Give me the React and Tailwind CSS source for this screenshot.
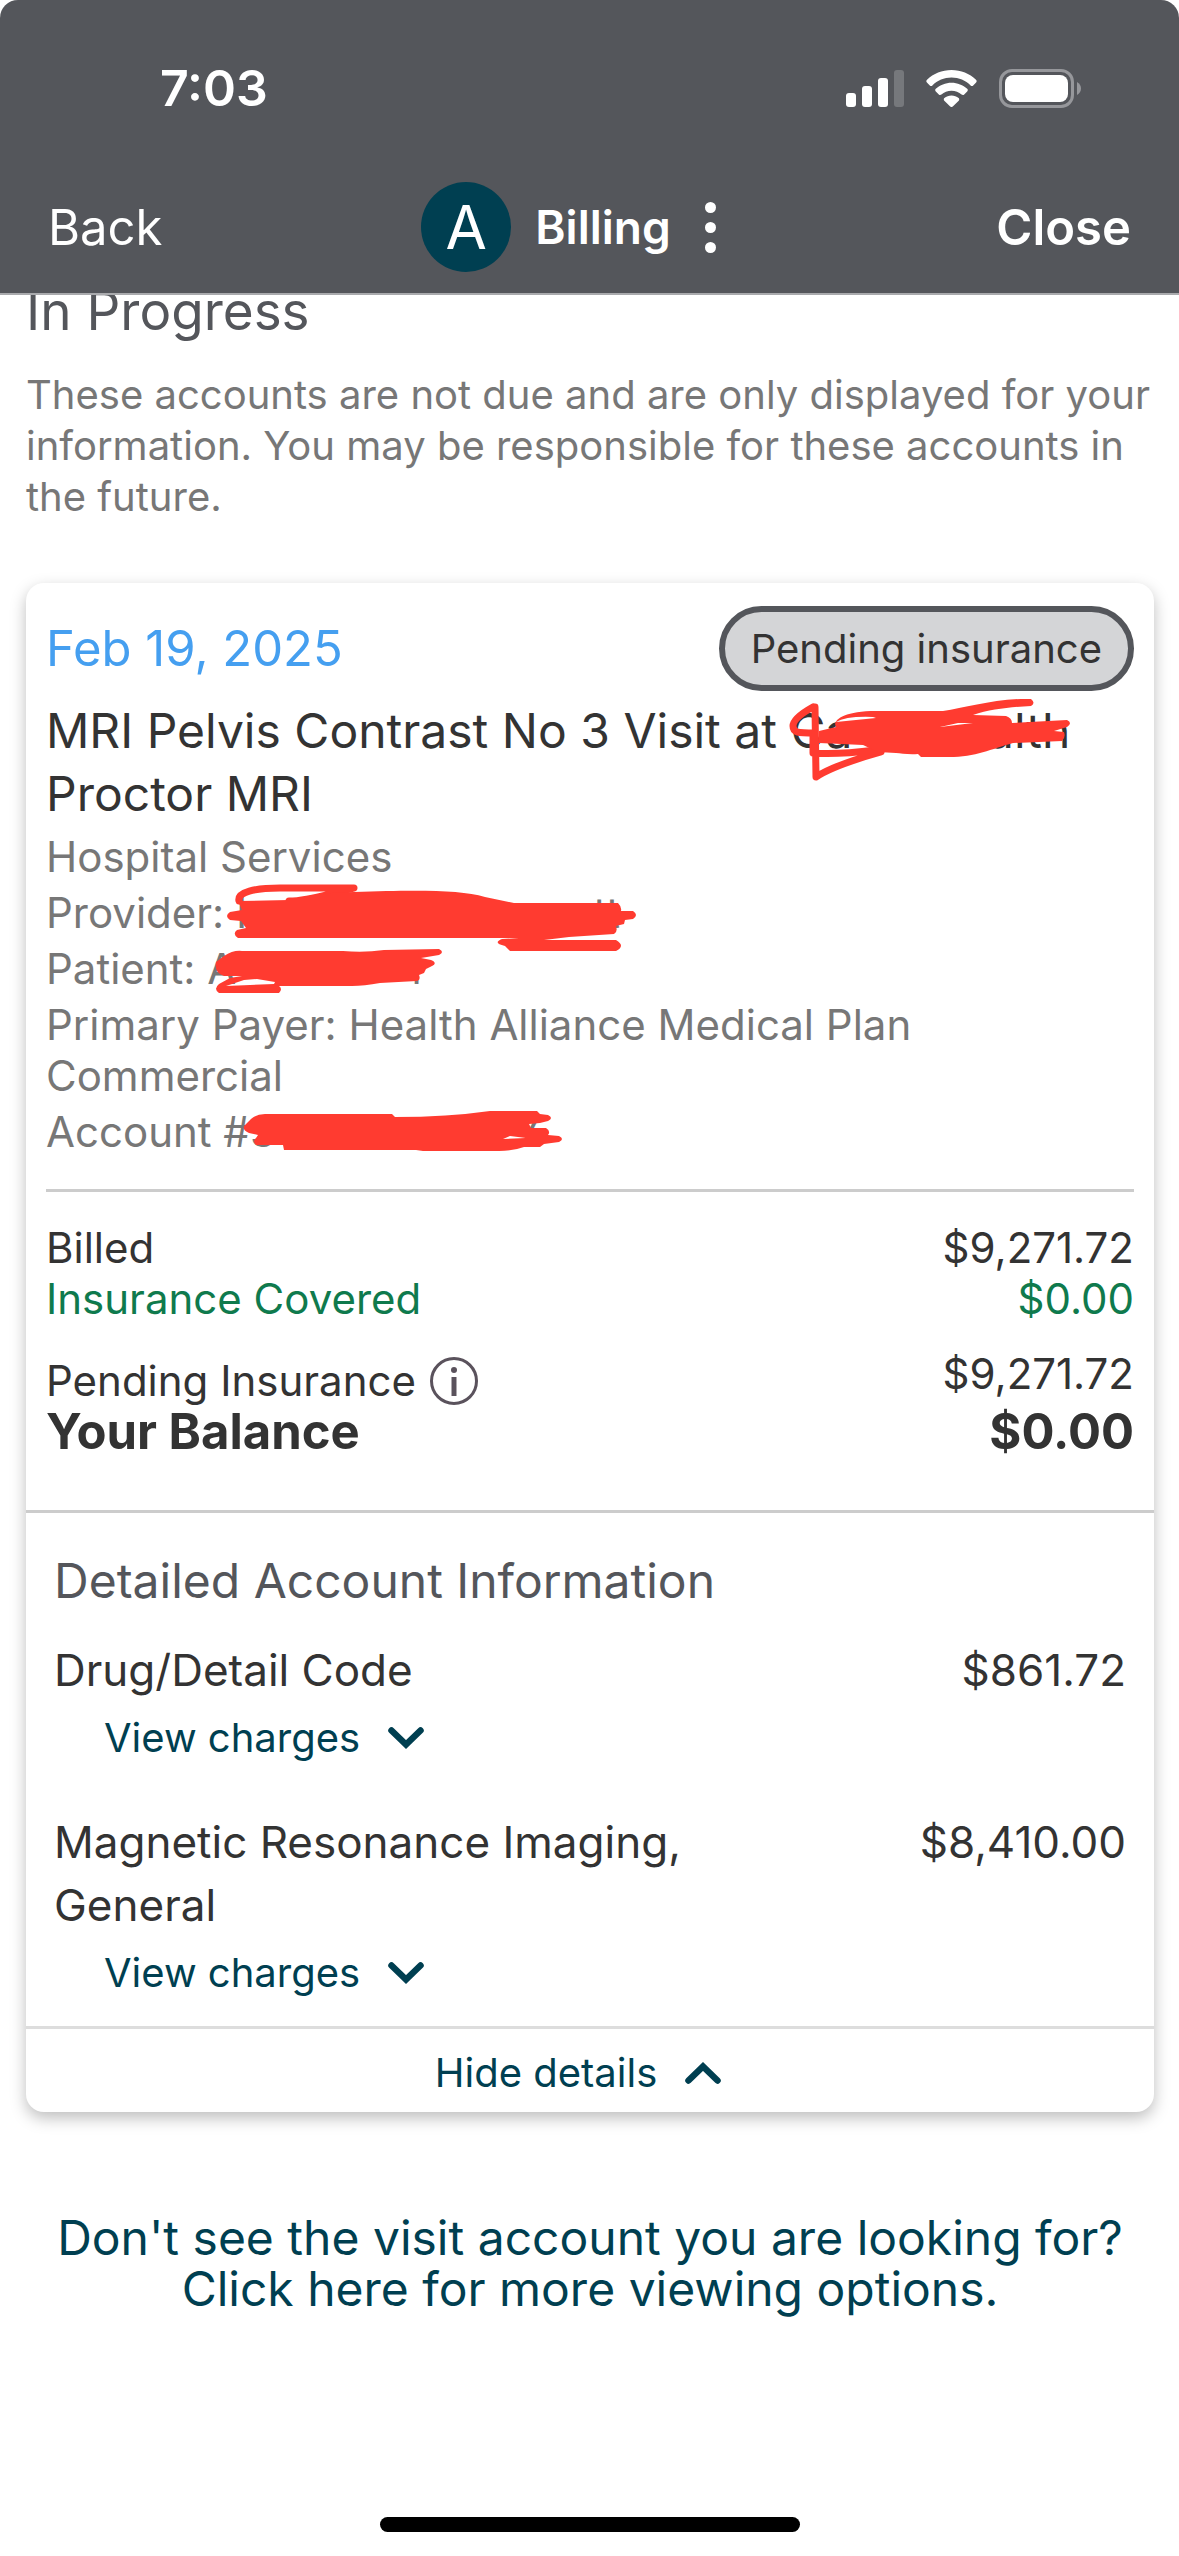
import { useState } from 'react';

const charges = [
  { id: 1, name: 'Drug/Detail Code', amount: '$861.72' },
  { id: 2, name: 'Magnetic Resonance Imaging, General', amount: '$8,410.00' },
];

function StatusBar() {
  return (
    <div className="flex h-[120px] items-center justify-between pt-14 pl-[160px] pr-[98px]">
      <span className="text-[50px] leading-none font-semibold">7:03</span>
      <div className="flex items-center gap-[22px]">
        <svg className="h-[37px] w-[58px]" viewBox="0 0 58 37" fill="#fff">
          <rect x="0" y="23" width="10" height="14" rx="3" />
          <rect x="16" y="16" width="10" height="21" rx="3" />
          <rect x="32" y="8" width="10" height="29" rx="3" />
          <rect x="48" y="0" width="10" height="37" rx="3" fill="#76787c" />
        </svg>
        <svg className="h-[37px] w-[51px]" viewBox="0 0 51 37" fill="#fff">
          <path d="M25.500 0C35 0 43.500 3.600 50 9.700c.9.800.9 1.900.1 2.700l-2.900 3c-.7.700-1.800.7-2.600 0C39.500 10.500 33 7.600 25.500 7.600S11.500 10.500 6.400 15.400c-.8.700-1.900.7-2.600 0l-2.900-3c-.8-.8-.8-1.900.1-2.700C7.500 3.600 16 0 25.500 0z" />
          <path d="M25.500 12.700c6 0 11.500 2.300 15.700 6.100.8.700.8 1.900 0 2.700l-3 3c-.7.700-1.800.7-2.600.1-2.700-2.400-6.200-3.900-10.100-3.900s-7.400 1.500-10.100 3.900c-.8.600-1.900.6-2.600-.1l-3-3c-.8-.8-.8-2 0-2.700 4.200-3.800 9.700-6.100 15.700-6.100z" />
          <path d="M25.500 25.500c2.700 0 5.200 1 7.100 2.600.8.700.8 1.800.1 2.600l-5.900 5.800c-.7.700-1.900.7-2.600 0l-5.900-5.800c-.7-.8-.7-1.900.1-2.600 1.900-1.600 4.400-2.600 7.100-2.600z" />
        </svg>
        <svg className="h-[39px] w-[82px]" viewBox="0 0 82 39">
          <rect x="1.500" y="1.500" width="72" height="36" rx="11.500" fill="none" stroke="#96979b" strokeWidth="3" />
          <rect x="6" y="6" width="63" height="27" rx="8" fill="#fff" />
          <path d="M78 13c2.500 1.200 4 3.700 4 6.500s-1.500 5.300-4 6.500z" fill="#96979b" />
        </svg>
      </div>
    </div>
  );
}

function NavBar() {
  return (
    <nav className="mt-[62px] grid grid-cols-[1fr_auto_1fr] items-center px-[48px] pb-[21px]">
      <button className="justify-self-start text-[49px] leading-none">Back</button>
      <div className="flex items-center">
        <span className="flex size-[90px] items-center justify-center rounded-full bg-[#003f51] text-[60px] leading-none">A</span>
        <h1 className="ml-6 text-[46px] leading-none font-semibold">Billing</h1>
        <button aria-label="More options" className="pr-[42px] pl-[34px]">
          <svg className="h-[51px] w-[11px]" viewBox="0 0 11 51" fill="#fff">
            <circle cx="5.500" cy="5.500" r="5.500" />
            <circle cx="5.500" cy="25.500" r="5.500" />
            <circle cx="5.500" cy="45.500" r="5.500" />
          </svg>
        </button>
      </div>
      <button className="justify-self-end text-[49px] leading-none font-semibold">Close</button>
    </nav>
  );
}

function Chevron({ up }) {
  return (
    <svg className="h-[22px] w-9" viewBox="0 0 36 22" fill="none" stroke="#003f51" strokeWidth="6.500" strokeLinecap="round" strokeLinejoin="miter">
      <path d={up ? 'M3.500 18.500 18 4.500 32.500 18.500' : 'M3.500 3.500 18 17.500 32.500 3.500'} />
    </svg>
  );
}

function InfoIcon() {
  return (
    <svg className="size-12" viewBox="0 0 48 48" fill="none" stroke="#5a525c">
      <circle cx="24" cy="24" r="22.500" strokeWidth="3" />
      <path d="M24 20v19" strokeWidth="5" />
      <circle cx="24" cy="13" r="3" fill="#5a525c" stroke="none" />
    </svg>
  );
}

// hand-drawn marker over the hidden values
const marks = {
  facility: (
    <svg className="absolute -top-1 -left-1 h-[95px] w-[290px] max-w-none" viewBox="0 0 290 95" fill="#ff3b30">
      <path d="M27 12C18 17 7 24 7 31s5 7 22 7M29 12 30 82C45 72 70 64 95 57M27 38v20Q50 60 90 55" fill="none" stroke="#ff3b30" strokeWidth="7" strokeLinecap="round" strokeLinejoin="round" />
      <path d="M33 36 50 32C46 26 56 16 90 16H157C180 13 210 3 245 4q5 4 0 7C225 12 205 14 187 20L220 21q6 2 6 7L281 25q6 3 0 7L268 36 278 37q2 5-2 9L227 48C205 54 190 62 163 62H135l-3-3C122 60 115 58 110 58L92 57 77 50 33 48zM50 27 90 23 87 22Q60 21 50 27zM154 32 172 28H187z" fillRule="evenodd" />
    </svg>
  ),
  provider: (
    <svg className="absolute -top-1 -left-4 h-[72px] w-[420px] max-w-none" viewBox="0 0 420 72" fill="#ff3b30">
      <path d="M19 18C17 9 35 5 60 5H134C110 10 90 18 69 18" fill="none" stroke="#ff3b30" strokeWidth="7" strokeLinecap="round" strokeLinejoin="round" />
      <path d="M18 18 69 17C90 12 110 9 134 9 200 7 240 7 265 14L294 20H398q4 4 3 8L413 28q6 4 0 8L405 37 404 41 396 43q2 6-2 8L349 54 324 57H396q10 6 0 11H290L285 63Q272 60 282 56L299 55H18q-6-4-1-8L26 45 21 38 10 37q-6-4 0-8L22 27zM303 50 325 47 343 48 311 56z" />
    </svg>
  ),
  patient: (
    <svg className="absolute -top-1 -left-2 h-[60px] w-[250px] max-w-none" viewBox="0 0 250 60" fill="#ff3b30">
      <path d="M17 23 25 17Q34 11 43 12H144Q165 14 185 11L240 10q6 3 0 6L222 19 232 21q7 3 1 6L227 30 225 34 220 36q2 5-2 6L181 44Q165 47 153 47H80q4 3 0 7H20Q14 50 20 45L31 39 43 37 25 37Q15 34 17 23zM27 47 45 41 58 40 76 43 75 45z" fillRule="evenodd" />
    </svg>
  ),
  account: (
    <svg className="absolute -top-1 -left-3 h-[56px] w-[330px] max-w-none" viewBox="0 0 330 56" fill="#ff3b30">
      <path d="M7 23 13 17Q18 12 27 12H154l3 3Q210 15 252 9H299l3 3L310 13q6 3 0 6L302 21 291 22 293 26 308 26q5 3 2 7L321 34q6 3 0 6L306 42 302 45 286 45Q275 49 261 49H185L178 48H46L45 43 18 43q-4-4 0-7L20 33 11 31Q3 27 7 23zM265 37 272 34 288 36z" fillRule="evenodd" />
    </svg>
  ),
};

function Hidden({ mark, start, end, className }) {
  return (
    <span className={`relative inline-flex justify-between ${className}`}>
      <span>{start}</span>
      <span>{end}</span>
      {marks[mark]}
    </span>
  );
}

function ChargeRow({ name, amount }) {
  return (
    <div>
      <div className="flex justify-between text-[44px] leading-[63px] text-[#333]">
        <h4 className="w-[650px]">{name}</h4>
        <span>{amount}</span>
      </div>
      <button className="mt-[10px] ml-[50px] flex items-center gap-7 text-[40px] leading-[51px] text-[#003f51]">
        View charges <Chevron />
      </button>
    </div>
  );
}

function AccountCard() {
  const [open, setOpen] = useState(true);

  return (
    <article className="mt-[61px] rounded-[18px] bg-white shadow-[0_6px_16px_rgba(0,0,0,0.26)]">
      <div className="px-5 pt-[23px]">
        <div className="flex items-center justify-between">
          <h3 className="text-[49px] leading-[51px] text-[#459ff0]">Feb 19, 2025</h3>
          <span className="rounded-full border-6 border-[#54565b] bg-[#d4d5d7] px-[26px] py-[11px] text-[40px] leading-[51px] text-[#333]">
            Pending insurance
          </span>
        </div>

        <p className="mt-2 text-[48px] leading-[63px] text-[#333]">
          MRI Pelvis Contrast No 3 Visit at <Hidden mark="facility" start="Ca" end="alth" className="w-[280px]" /> Proctor MRI
        </p>
        <div className="mt-[6px] space-y-[5px] text-[42px] leading-[51px] text-[#777]">
          <p>Hospital Services</p>
          <p>Provider: <Hidden mark="provider" start="I" end="tt" className="w-[384px]" /></p>
          <p>Patient: <Hidden mark="patient" start="A" end="r" className="w-[220px]" /></p>
          <p className="max-w-[900px]">Primary Payer: Health Alliance Medical Plan Commercial</p>
          <p>Account #<Hidden mark="account" start="3" end="7" className="w-[290px]" /></p>
        </div>

        <div className="mt-8 border-t-3 border-[#ccc] pt-[30px] text-[42px] leading-[51px] text-[#333]">
          <div className="flex justify-between">
            <span>Billed</span>
            <span>$9,271.72</span>
          </div>
          <div className="flex justify-between text-[#0f7a4d]">
            <span>Insurance Covered</span>
            <span>$0.00</span>
          </div>
          <div className="mt-6 flex justify-between">
            <span className="flex items-center gap-[14px] pt-[7px]">
              Pending Insurance
              <button aria-label="About pending insurance"><InfoIcon /></button>
            </span>
            <span>$9,271.72</span>
          </div>
          <div className="flex justify-between text-[49px] font-bold">
            <span>Your Balance</span>
            <span>$0.00</span>
          </div>
        </div>
      </div>

      {open && (
        <section className="mt-[53px] border-t-3 border-[#ccc] px-7 pt-9">
          <h3 className="mb-[27px] text-[48px] leading-[63px] text-[#54565b]">Detailed Account Information</h3>
          <div className="space-y-12">
            {charges.map(c => <ChargeRow key={c.id} name={c.name} amount={c.amount} />)}
          </div>
        </section>
      )}

      <button
        className="mt-7 flex w-full items-center justify-center gap-7 border-t-3 border-[#ddd] pt-[18px] pb-[14px] pr-6 text-[40px] leading-[51px] text-[#003f51]"
        onClick={() => setOpen(o => !o)}
      >
        {open ? 'Hide details' : 'Show details'} <Chevron up={open} />
      </button>
    </article>
  );
}

export default function App() {
  return (
    <div className="flex min-h-screen flex-col bg-white font-['Inter',sans-serif]">
      <header className="relative z-10 rounded-t-[18px] border-b-2 border-[#a9aaad] bg-[#54565b] text-white">
        <StatusBar />
        <NavBar />
      </header>

      <main className="-mt-4 pr-[25px] pl-[26px]">
        <h2 className="text-[53px] leading-[64px] text-[#54565b]">In Progress</h2>
        <p className="mt-[26px] text-[40px] leading-[51px] text-[#777]">
          These accounts are not due and are only displayed for your information. You may be responsible for these accounts in the future.
        </p>
        <AccountCard />
        <a href="#more" className="mt-[100px] block text-center text-[48px] leading-[51px] text-[#003f51]">
          Don't see the visit account you are looking for? Click here for more viewing options.
        </a>
      </main>

      <div className="mx-auto mt-auto mb-6 h-[15px] w-[420px] rounded-full bg-black" />
    </div>
  );
}
